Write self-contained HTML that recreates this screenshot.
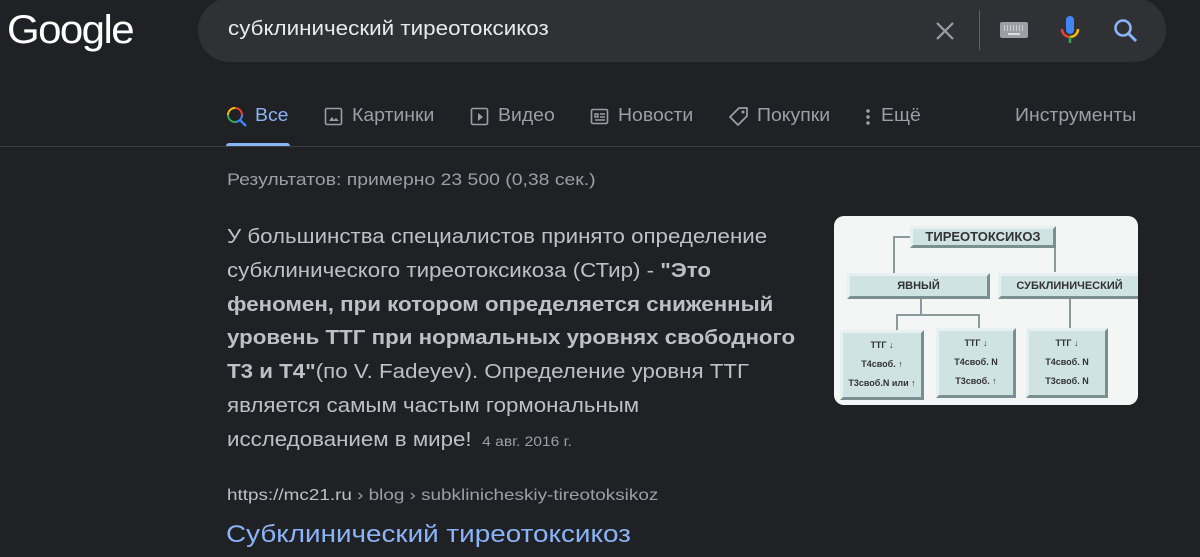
<!DOCTYPE html>
<html><head><meta charset="utf-8"><style>
body{margin:0;width:1200px;height:557px;background:#202124;font-family:"Liberation Sans",Arial,sans-serif;overflow:hidden;position:relative;color:#bdc1c6}
.a{position:absolute;white-space:nowrap;transform-origin:0 0}
.sb{position:absolute;left:198px;top:-2px;width:968px;height:64px;background:#303134;border-radius:32px}
.tab{position:absolute;top:105px;font-size:18px;color:#9aa0a6;transform:scaleX(1.08);transform-origin:0 0;white-space:nowrap}
.body{position:absolute;left:227px;top:221px;font-size:20px;line-height:33.8px;color:#bdc1c6;width:512px;transform:scaleX(1.115);transform-origin:0 0}
.body b{color:#bdc1c6}
.bx{position:absolute;background:#cfe3e3;border:3px solid #8fa8a8;border-color:#e6f0f0 #7a9090 #7a9090 #e6f0f0;font-weight:bold;color:#333;font-size:11px;text-align:center;box-sizing:border-box}
.ln{position:absolute;background:#8a9a9a}
</style></head><body>
<div class="a" style="left:7px;top:8px;font-size:40px;color:#fff;letter-spacing:-1.5px;transform:scaleX(1.05)">Google</div>
<div class="sb"></div>
<div class="a" style="left:228px;top:18px;font-size:20px;color:#e8eaed;transform:scaleX(1.12)">субклинический тиреотоксикоз</div>
<svg class="a" style="left:934px;top:20px" width="22" height="22" viewBox="0 0 22 22"><path d="M3 3L19 19M19 3L3 19" stroke="#9aa0a6" stroke-width="2.2"/></svg>
<div class="a" style="left:979px;top:10px;width:1px;height:40px;background:#5f6368"></div>
<div class="a" style="left:1000px;top:22px;width:28px;height:16px;background:#9aa0a6;border-radius:2px"></div>
<div class="a" style="left:1004px;top:25px;width:20px;height:6px;background:repeating-linear-gradient(90deg,#ccc 0 1px,#9aa0a6 1px 3px)"></div>
<div class="a" style="left:1008px;top:33px;width:12px;height:2px;background:#ddd"></div>
<svg class="a" style="left:1058px;top:15px" width="24" height="32" viewBox="0 0 24 32"><rect x="8" y="1" width="8" height="18" rx="4" fill="#4285f4"/><path d="M4 14a8 8 0 0 0 8 8" stroke="#ea4335" stroke-width="2.5" fill="none"/><path d="M12 22a8 8 0 0 0 8-8" stroke="#fbbc05" stroke-width="2.5" fill="none"/><path d="M12 22v6" stroke="#34a853" stroke-width="2.5"/></svg>
<svg class="a" style="left:1112px;top:17px" width="28" height="28" viewBox="0 0 28 28"><circle cx="11" cy="11" r="7.5" stroke="#8ab4f8" stroke-width="2.6" fill="none"/><path d="M16.5 16.5L24 24" stroke="#8ab4f8" stroke-width="3"/></svg>

<svg class="a" style="left:226px;top:106px" width="22" height="22" viewBox="0 0 22 22"><path d="M16 9a7 7 0 0 0-7-7" stroke="#ea4335" stroke-width="2" fill="none"/><path d="M9 2a7 7 0 0 0-7 7" stroke="#fbbc05" stroke-width="2" fill="none"/><path d="M2 9a7 7 0 0 0 7 7" stroke="#34a853" stroke-width="2" fill="none"/><path d="M9 16a7 7 0 0 0 7-7" stroke="#4285f4" stroke-width="2" fill="none"/><path d="M14 14l6 6" stroke="#4285f4" stroke-width="2.4"/></svg>
<div class="tab" style="left:255px;color:#8ab4f8">Все</div>
<div class="a" style="left:226px;top:143px;width:64px;height:3px;background:#8ab4f8;border-radius:3px 3px 0 0"></div>
<svg class="a" style="left:324px;top:107px" width="20" height="20"><rect x="1.5" y="1.5" width="16" height="16" rx="1.5" stroke="#9aa0a6" stroke-width="1.6" fill="none"/><path d="M5 14l3-4 2 3 2-2 3 3z" fill="#9aa0a6"/></svg>
<div class="tab" style="left:352px">Картинки</div>
<svg class="a" style="left:470px;top:107px" width="20" height="20"><rect x="1.5" y="1.5" width="16" height="16" rx="1.5" stroke="#9aa0a6" stroke-width="1.6" fill="none"/><path d="M8 6l5 4-5 4z" fill="#9aa0a6"/></svg>
<div class="tab" style="left:498px">Видео</div>
<svg class="a" style="left:590px;top:107px" width="20" height="20"><rect x="1.5" y="2.5" width="16" height="14" rx="1.5" stroke="#9aa0a6" stroke-width="1.6" fill="none"/><path d="M5 7h3v3H5zM10 7h5M10 10h5M5 13h10" stroke="#9aa0a6" stroke-width="1.5" fill="none"/></svg>
<div class="tab" style="left:618px">Новости</div>
<svg class="a" style="left:728px;top:106px" width="22" height="22" viewBox="0 0 22 22"><path d="M11 2h8v8l-9 9-8-8z" stroke="#9aa0a6" stroke-width="1.7" fill="none" stroke-linejoin="round"/><circle cx="15" cy="6" r="1.5" fill="#9aa0a6"/></svg>
<div class="tab" style="left:757px">Покупки</div>
<svg class="a" style="left:864px;top:107px" width="8" height="20"><circle cx="4" cy="4" r="1.8" fill="#9aa0a6"/><circle cx="4" cy="10" r="1.8" fill="#9aa0a6"/><circle cx="4" cy="16" r="1.8" fill="#9aa0a6"/></svg>
<div class="tab" style="left:881px">Ещё</div>
<div class="tab" style="left:1015px">Инструменты</div>
<div class="a" style="left:0;top:146px;width:1200px;height:1px;background:#3c4043"></div>

<div class="a" style="left:227px;top:170px;font-size:17px;color:#9aa0a6;transform:scaleX(1.14)">Результатов: примерно 23 500 (0,38 сек.)</div>
<div class="body">У большинства специалистов принято определение субклинического тиреотоксикоза (СТир) - <b>"Это феномен, при котором определяется сниженный уровень ТТГ при нормальных уровнях свободного Т3 и Т4"</b>(по V. Fadeyev). Определение уровня ТТГ является самым частым гормональным исследованием в мире! <span style="font-size:14px;color:#9aa0a6">&nbsp;4 авг. 2016 г.</span></div>

<div class="a" style="left:834px;top:216px;width:304px;height:189px;background:#f4f6f6;border-radius:10px;overflow:hidden">
<div class="ln" style="left:59px;top:20px;width:18px;height:2px"></div>
<div class="ln" style="left:59px;top:20px;width:2px;height:38px"></div>
<div class="ln" style="left:220px;top:20px;width:2px;height:36px"></div>
<div class="ln" style="left:200px;top:20px;width:22px;height:2px"></div>
<div class="ln" style="left:86px;top:78px;width:2px;height:20px"></div>
<div class="ln" style="left:62px;top:98px;width:84px;height:2px"></div>
<div class="ln" style="left:62px;top:98px;width:2px;height:16px"></div>
<div class="ln" style="left:144px;top:98px;width:2px;height:14px"></div>
<div class="ln" style="left:235px;top:78px;width:2px;height:34px"></div>
<div class="bx" style="left:76px;top:10px;width:146px;height:22px;line-height:16px;font-size:13px">ТИРЕОТОКСИКОЗ</div>
<div class="bx" style="left:13px;top:57px;width:143px;height:26px;line-height:20px">ЯВНЫЙ</div>
<div class="bx" style="left:164px;top:57px;width:143px;height:26px;line-height:20px">СУБКЛИНИЧЕСКИЙ</div>
<div class="bx" style="left:6px;top:114px;width:84px;height:70px;font-size:9px;line-height:19px;padding-top:3px">ТТГ ↓<br>Т4своб. ↑<br>Т3своб.N или ↑</div>
<div class="bx" style="left:102px;top:112px;width:80px;height:70px;font-size:9px;line-height:19px;padding-top:3px">ТТГ ↓<br>Т4своб. N<br>Т3своб. ↑</div>
<div class="bx" style="left:192px;top:112px;width:82px;height:70px;font-size:9px;line-height:19px;padding-top:3px">ТТГ ↓<br>Т4своб. N<br>Т3своб. N</div>
</div>

<div class="a" style="left:227px;top:487px;font-size:16px;color:#bdc1c6;transform:scaleX(1.18)">https://mc21.ru <span style="color:#9aa0a6">› blog › subklinicheskiy-tireotoksikoz</span></div>
<div class="a" style="left:226px;top:521px;font-size:24px;color:#8ab4f8;transform:scaleX(1.16)">Субклинический тиреотоксикоз</div>
</body></html>
